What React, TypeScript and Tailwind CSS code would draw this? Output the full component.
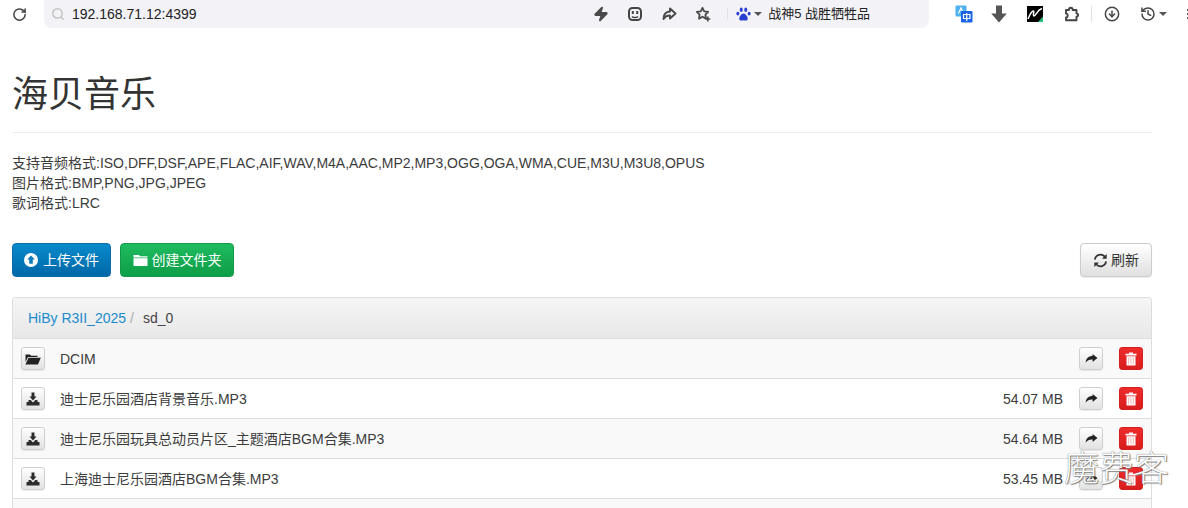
import React from "react";
import { RotateCw, Search, Zap, CircleArrowDown, History } from "lucide-react";

const Share = ({ className = "" }: { className?: string }) => (
  <svg viewBox="0 0 14 12" className={className} fill="currentColor">
    <path d="M8.2 1 L13.5 5.4 L8.2 9.8 V7 C5 6.8 2.6 7.6 0.6 10.6 C1 6.2 3.6 3.4 8.2 3.4 Z" />
  </svg>
);
const Trash = () => (
  <svg viewBox="0 0 12 14" className="w-3 h-[14px]">
    <path fill="#fff" d="M4 0.5 H8 V1.8 H11.5 V3.4 H0.5 V1.8 H4 Z" />
    <path fill="#fff" d="M1.5 4.2 H10.5 V13.5 H1.5 Z" />
    <path fill="#f4b6b6" d="M3.2 5.2 H4.2 V12.5 H3.2 Z M5.5 5.2 H6.5 V12.5 H5.5 Z M7.8 5.2 H8.8 V12.5 H7.8 Z" />
  </svg>
);
const Save = () => (
  <svg viewBox="0 0 14 14" className="w-[14px] h-[14px]" fill="#2b2b2b">
    <path d="M5.5 0.5 H8.5 V4.5 H10.5 L7 8.4 L3.5 4.5 H5.5 Z" />
    <path d="M2.5 8 H4.6 L7 10.4 L9.4 8 H11.5 V10 H13.5 V13.5 H0.5 V10 H2.5 Z" />
  </svg>
);
const FolderOpen = () => (
  <svg viewBox="0 0 16 12" className="w-[16px] h-[12px]" fill="#222">
    <path d="M0.5 9 V1.5 H5 L6 2.8 H12.5 V4 H3 Z" />
    <path d="M3.6 4.8 H15.8 L13 11.5 H0.4 Z" />
  </svg>
);
const Folder = () => (
  <svg viewBox="0 0 15 12" className="w-[15px] h-3" fill="#fff">
    <path d="M0.5 1 H6 L7 2.2 H14.5 V3.4 H0.5 Z" />
    <path d="M0.5 4.2 H14.5 V12 H0.5 Z" />
  </svg>
);
const UploadCircle = () => (
  <svg viewBox="0 0 14 14" className="w-[14px] h-[14px]">
    <circle cx="7" cy="7" r="7" fill="#fff" />
    <path fill="#0a7dba" d="M7 2.6 L10.8 6.6 H8.8 V10.8 H5.2 V6.6 H3.2 Z" />
  </svg>
);
const Refresh = () => (
  <svg viewBox="0 0 16 16" className="w-[15px] h-[15px]" fill="none" stroke="#333" strokeWidth="1.8">
    <path d="M2 7 A6 6 0 0 1 12.6 4" />
    <path d="M14 9 A6 6 0 0 1 3.4 12" />
    <path d="M14.6 1 V6 H9.6 Z" fill="#333" stroke="none" />
    <path d="M1.4 15 V10 H6.4 Z" fill="#333" stroke="none" />
  </svg>
);
const Paw = () => (
  <svg viewBox="0 0 16 16" className="w-[15px] h-[15px]" fill="#2a3fd0">
    <ellipse cx="5.6" cy="3" rx="1.6" ry="2.4" />
    <ellipse cx="10.4" cy="3" rx="1.6" ry="2.4" />
    <ellipse cx="2" cy="7" rx="1.6" ry="2" />
    <ellipse cx="14" cy="7" rx="1.6" ry="2" />
    <path d="M8 7 C5.5 7 3.5 10.5 3.5 12.5 C3.5 15 6.5 14.6 8 14.2 C9.5 14.6 12.5 15 12.5 12.5 C12.5 10.5 10.5 7 8 7 Z" />
  </svg>
);
const FaceBox = () => (
  <svg viewBox="0 0 16 16" className="w-4 h-4" fill="none" stroke="#444" strokeWidth="2">
    <rect x="2" y="2" width="12" height="12" rx="3.5" />
    <path d="M5.8 5 V8 M10.2 5 V8" strokeWidth="2" />
    <path d="M5 10.4 C6.5 12 9.5 12 11 10.4" strokeWidth="1.5" />
  </svg>
);
const ToolShare = () => (
  <svg viewBox="0 0 16 16" className="w-4 h-4" fill="none" stroke="#4a4a4a" strokeWidth="2" strokeLinejoin="round">
    <path d="M9 2.5 L14.5 7.5 L9 12.5 V9.6 C6 9.4 4 10.5 2.5 13 C2.5 8.5 5 5.8 9 5.5 Z" />
  </svg>
);
const StarPlus = () => (
  <svg viewBox="0 0 16 16" className="w-4 h-4" fill="none" stroke="#4a4a4a" strokeWidth="1.8" strokeLinejoin="round">
    <path d="M7.5 1.8 L9.2 5.4 L13.2 5.9 L10.4 8.6 L11 12.6 L7.5 10.7 L4 12.6 L4.6 8.6 L1.8 5.9 L5.8 5.4 Z" />
    <path d="M12.8 10.5 V15.5 M10.3 13 H15.3" strokeWidth="1.6" />
  </svg>
);
const Translate = () => (
  <svg viewBox="0 0 18 18" className="w-[18px] h-[18px]">
    <rect x="0.5" y="0.5" width="11" height="11" rx="1" fill="#4fb2ee" />
    <path d="M3.5 8.5 L6 3 L8.5 8.5" stroke="#fff" strokeWidth="1.2" fill="none" />
    <rect x="6" y="6" width="11.5" height="11.5" rx="1" fill="#1a62e6" />
    <path d="M8.5 9.5 H15 V13.5 H8.5 Z M11.75 8 V16" stroke="#fff" strokeWidth="1.2" fill="none" />
  </svg>
);
const BlackLogo = () => (
  <svg viewBox="0 0 16 16" className="w-4 h-4">
    <rect width="16" height="16" fill="#000" />
    <path d="M1 13 C3 8 5 5 6.5 5 C7.5 5 5.5 10 7 10 C9 10 10 4 15 2.5" stroke="#fff" strokeWidth="1.5" fill="none" />
    <path d="M11 16 L16 10.5 V16 Z" fill="#22c07a" />
  </svg>
);
const DownArrow = () => (
  <svg viewBox="0 0 16 18" className="w-4 h-[18px]" fill="#555">
    <path d="M5 0.5 H11 V8.5 H15.8 L8 17.5 L0.2 8.5 H5 Z" />
  </svg>
);
const PuzzleIcon = () => (
  <svg viewBox="0 0 16 16" className="w-4 h-4" fill="none" stroke="#444" strokeWidth="1.9" strokeLinejoin="round">
    <path d="M6 3.4 C6 1.2 9.6 1.2 9.6 3.4 V4 H13.5 V7.4 C15.6 7.4 15.6 10.8 13.5 10.8 V14.2 H3 V11.4 C5.2 11.4 5.2 7.6 3 7.6 V4 H6 Z" />
  </svg>
);

const IconBtn = ({ children, danger = false }: { children: React.ReactNode; danger?: boolean }) => (
  <span
    className={
      danger
        ? "flex h-[23px] w-6 items-center justify-center rounded-[3px] border border-[#d21f1f] bg-linear-to-b from-[#ee2b2b] to-[#d81c1c]"
        : "flex h-[23px] w-6 items-center justify-center rounded-[3px] border border-[#cfcfcf] bg-linear-to-b from-white to-[#e2e2e2] shadow-[0_1px_1px_rgba(0,0,0,0.08)]"
    }
  >
    {children}
  </span>
);

const Row = ({
  icon,
  name,
  size,
  shaded,
}: {
  icon: React.ReactNode;
  name: string;
  size?: string;
  shaded?: boolean;
}) => (
  <div className={`flex h-10 items-center border-b border-[#dddddd] pl-2 pr-2 ${shaded ? "bg-[#f9f9f9]" : "bg-white"}`}>
    <IconBtn>{icon}</IconBtn>
    <span className="ml-[15px] flex-1 text-[14px] leading-5 text-[#3c3c3c]">{name}</span>
    {size && <span className="mr-4 text-[14px] leading-5 text-[#3c3c3c]">{size}</span>}
    <IconBtn>
      <Share className="h-[11px] w-[13px] text-[#222]" />
    </IconBtn>
    <span className="ml-4">
      <IconBtn danger>
        <Trash />
      </IconBtn>
    </span>
  </div>
);

const font = "font-['Liberation_Sans','Noto_Sans_CJK_SC',sans-serif]";

export default function App() {
  return (
    <div className={`relative h-[508px] w-[1188px] overflow-hidden bg-white ${font} text-[#333]`}>
      {/* browser toolbar */}
      <div className="flex h-7 items-center">
        <div className="flex w-[44px] shrink-0 justify-center pr-[6px]">
          <RotateCw size={15} strokeWidth={2.4} className="text-[#444]" />
        </div>
        <div className="flex h-7 w-[885px] shrink-0 items-center rounded-b-lg bg-[#f2f2f7] pl-[7px] pr-[59px]">
          <Search size={14} strokeWidth={2.6} className="text-[#c4c4c4]" />
          <span className="ml-[7px] flex-1 text-[14px] text-[#222]">192.168.71.12:4399</span>
          <div className="flex items-center gap-[18px] text-[#4a4a4a]">
            <Zap size={16} fill="#4a4a4a" />
            <FaceBox />
            <ToolShare />
            <StarPlus />
          </div>
          <span className="ml-[16px] h-[12px] w-px bg-[#e2e2e2]" />
          <span className="ml-[8px]"><Paw /></span>
          <span className="ml-[3px] h-0 w-0 border-x-[4px] border-t-[4px] border-x-transparent border-t-[#555]" />
          <span className="ml-[6px] whitespace-nowrap text-[13px] text-[#222]">战神5 战胜牺牲品</span>
        </div>
        <div className="ml-[26px] flex shrink-0 items-center text-[#444]">
          <Translate />
          <span className="ml-[18px]"><DownArrow /></span>
          <span className="ml-[20px]"><BlackLogo /></span>
          <span className="ml-[20px]"><PuzzleIcon /></span>
          <span className="ml-[12px] h-[16px] w-px bg-[#e2e2e2]" />
          <CircleArrowDown size={16} strokeWidth={2.2} className="ml-[12px]" />
          <History size={16} strokeWidth={2.2} className="ml-[20px]" />
          <span className="ml-[3px] h-0 w-0 border-x-[4px] border-t-[4px] border-x-transparent border-t-[#555]" />
          <span className="ml-[20px] flex flex-col gap-[2px]">
            <span className="h-[2px] w-[2px] bg-[#555]" />
            <span className="h-[2px] w-[2px] bg-[#555]" />
            <span className="h-[2px] w-[2px] bg-[#555]" />
          </span>
        </div>
      </div>

      {/* page */}
      <div className="w-[1152px] pl-3">
        <h1 className="mt-[47px] border-b border-[#eeeeee] pb-[18px] text-[36px] font-normal leading-[39px] text-[#333]">海贝音乐</h1>
        <div className="mt-[20px] text-[14px] leading-5 text-[#3c3c3c]">
          <div>支持音频格式:ISO,DFF,DSF,APE,FLAC,AIF,WAV,M4A,AAC,MP2,MP3,OGG,OGA,WMA,CUE,M3U,M3U8,OPUS</div>
          <div>图片格式:BMP,PNG,JPG,JPEG</div>
          <div>歌词格式:LRC</div>
        </div>
        <div className="mt-[30px] flex items-center">
          <button className="flex h-[34px] w-[99px] items-center justify-center gap-[5px] rounded border border-[#0b6ea8] bg-linear-to-b from-[#0a8acb] to-[#0068a8] text-[14px] text-white">
            <UploadCircle />
            上传文件
          </button>
          <button className="ml-[9px] flex h-[34px] w-[114px] items-center justify-center gap-[4px] rounded border border-[#14994c] bg-linear-to-b from-[#1fbb5f] to-[#0c9e48] text-[14px] text-white">
            <Folder />
            创建文件夹
          </button>
          <button className="ml-auto flex h-[34px] w-[72px] items-center justify-center gap-[3px] rounded border border-[#cccccc] bg-linear-to-b from-white to-[#e0e0e0] text-[14px] text-[#333] shadow-[0_1px_1px_rgba(0,0,0,0.08)]">
            <Refresh />
            刷新
          </button>
        </div>
        <div className="mt-[20px] overflow-hidden rounded-t border-x border-t border-[#dddddd]">
          <div className="flex h-[41px] items-center border-b border-[#dddddd] bg-linear-to-b from-[#f5f5f5] to-[#e8e8e8] pl-[15px] text-[14px]">
            <span className="text-[#1a8ccc]">HiBy R3II_2025</span>
            <span className="ml-[4px] text-[#aaaaaa]">/</span>
            <span className="ml-[9px] text-[#444]">sd_0</span>
          </div>
          <Row icon={<FolderOpen />} name="DCIM" shaded />
          <Row icon={<Save />} name="迪士尼乐园酒店背景音乐.MP3" size="54.07 MB" />
          <Row icon={<Save />} name="迪士尼乐园玩具总动员片区_主题酒店BGM合集.MP3" size="54.64 MB" shaded />
          <Row icon={<Save />} name="上海迪士尼乐园酒店BGM合集.MP3" size="53.45 MB" />
          <div className="h-10 bg-[#f9f9f9]" />
        </div>
      </div>

      {/* watermark */}
      <div className="absolute left-[1064px] top-[449px] whitespace-nowrap text-[35px] font-light leading-10 text-white [text-shadow:0_0_1px_#555,1px_1px_1px_#888]">
        魔费客
      </div>
    </div>
  );
}
